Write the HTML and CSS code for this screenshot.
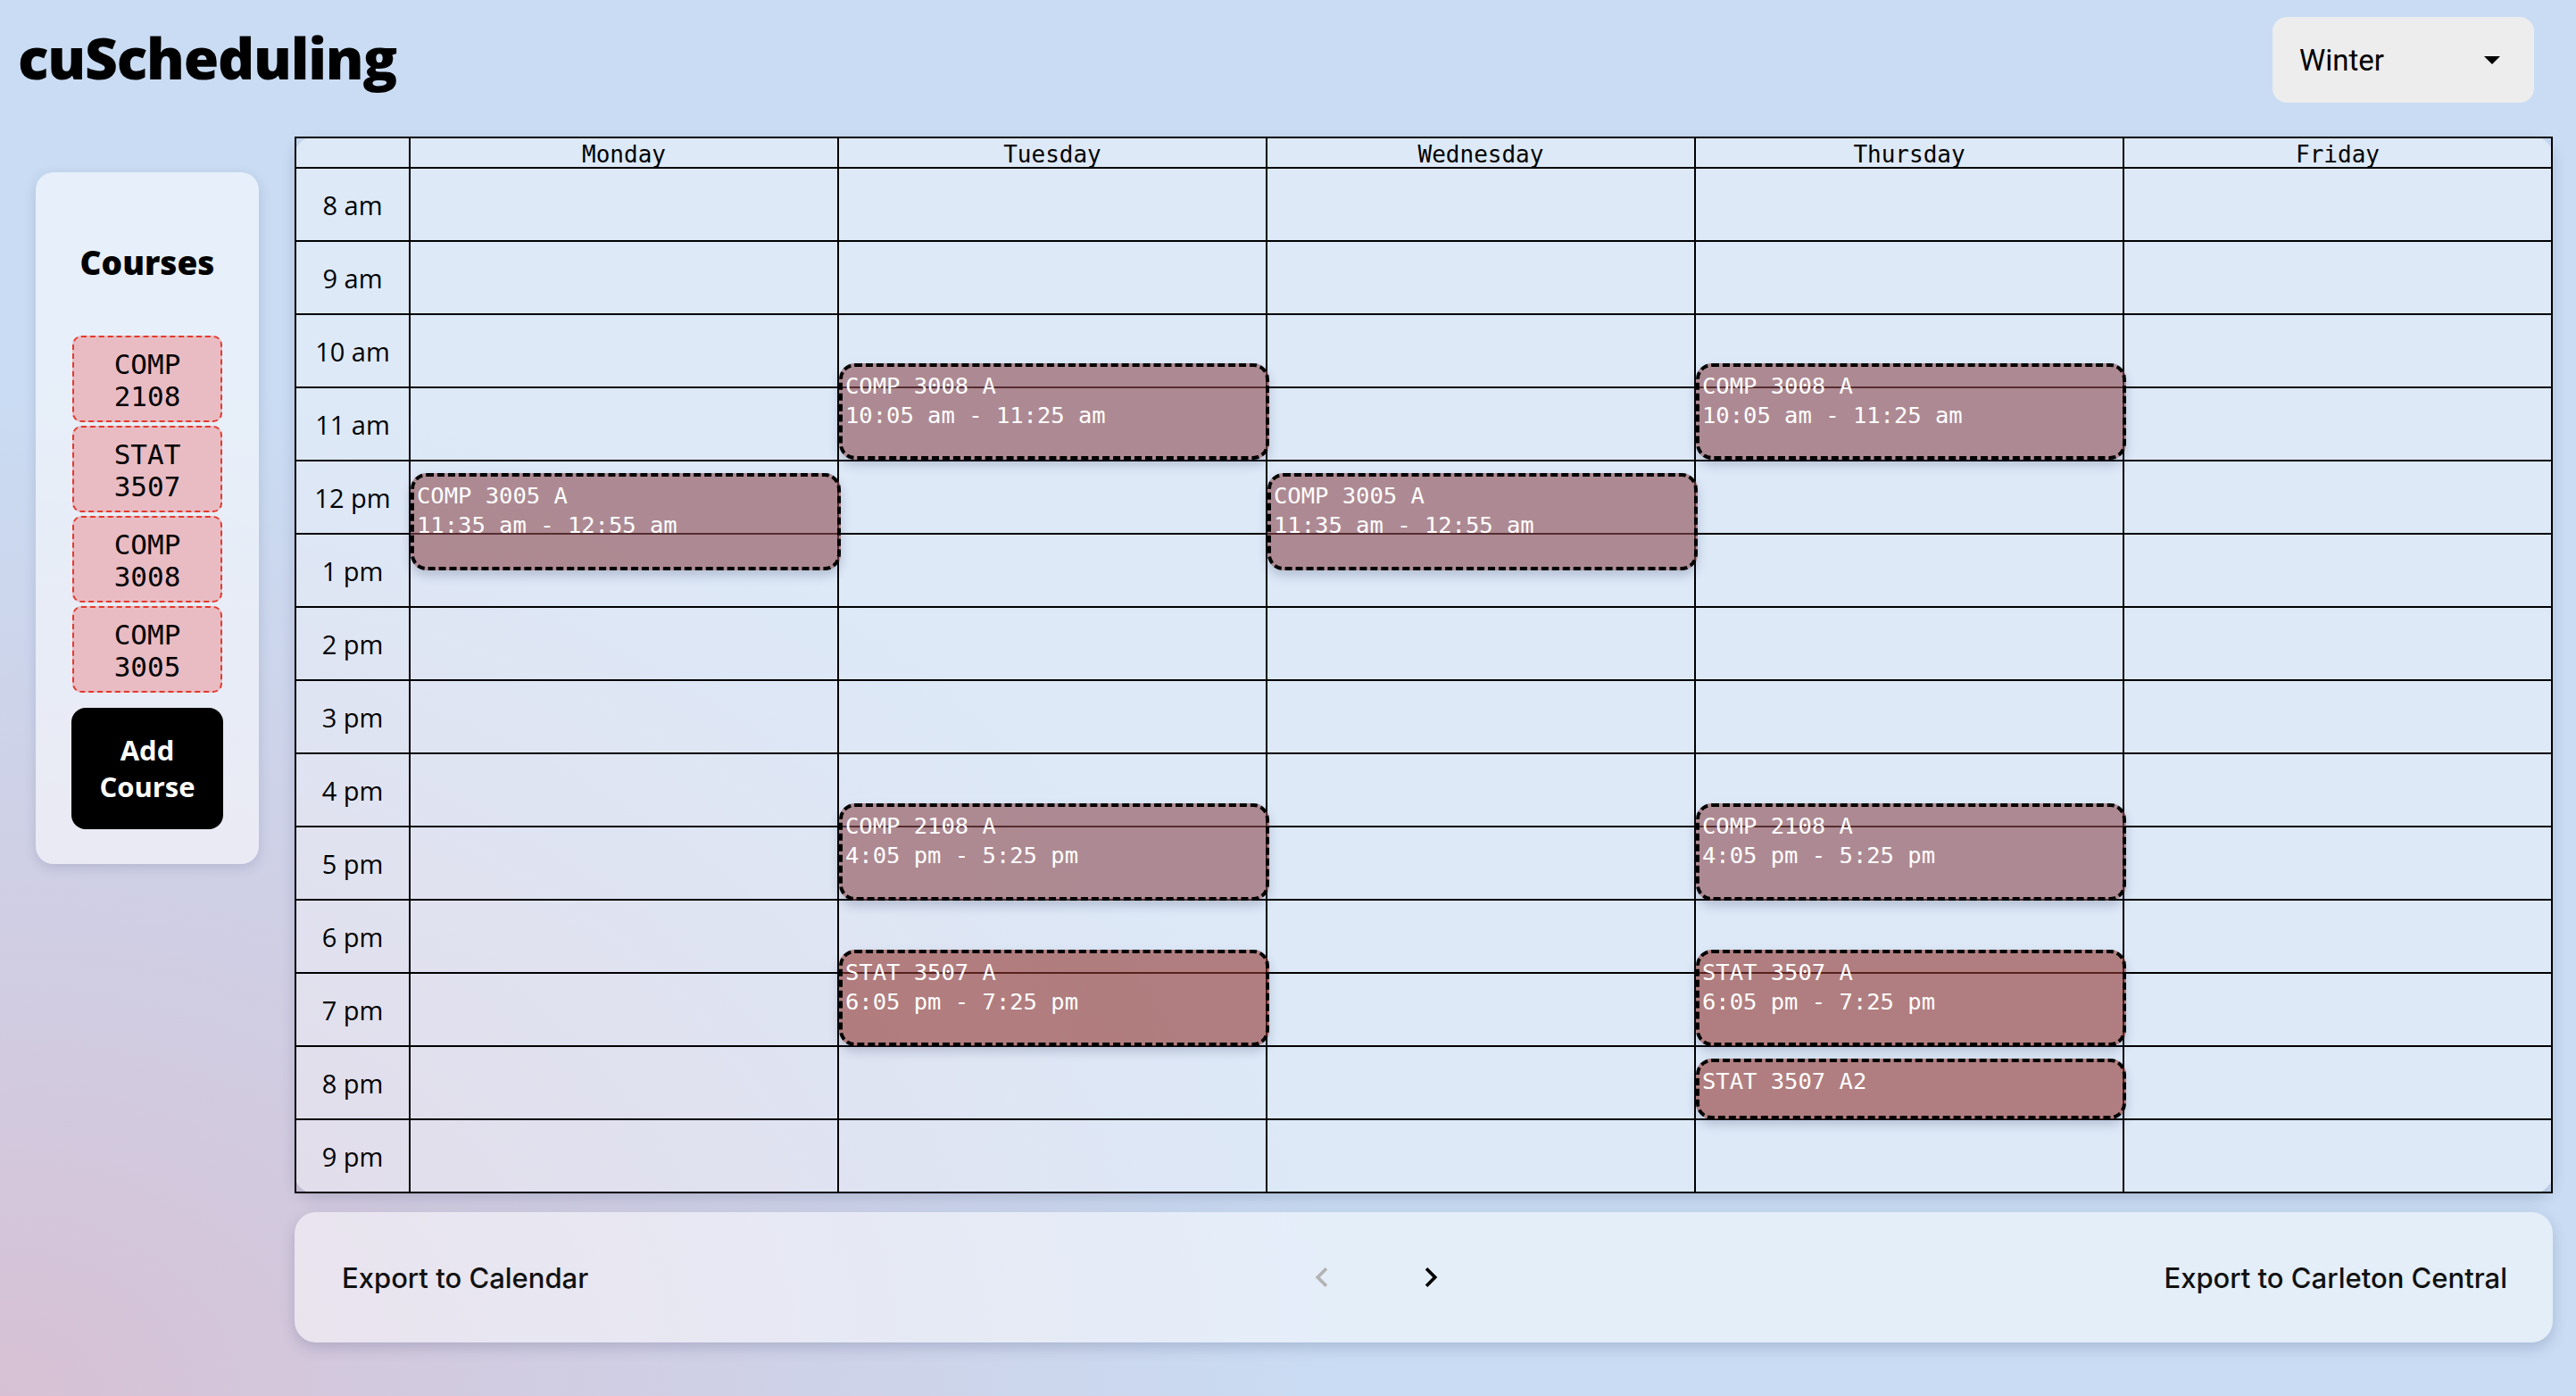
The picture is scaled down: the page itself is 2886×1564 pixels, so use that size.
FILE: index.html
```html
<!DOCTYPE html>
<html lang="en">
<head>
<meta charset="utf-8">
<title>cuScheduling</title>
<link rel="stylesheet" href="styles.css">
</head>
<body>
<div class="app">
  <header class="topbar">
    <h1 class="title">cuScheduling</h1>
    <div class="select">
      <span class="select-value">Winter</span>
      <svg class="caret" viewBox="7 10 10 5" width="18" height="9"><path d="M7 10l5 5 5-5z"/></svg>
    </div>
  </header>
  <div class="main">
    <aside class="sidebar">
      <h2 class="sidebar-title">Courses</h2>
      <div class="chips">
        <div class="chip">COMP<br>2108</div>
        <div class="chip">STAT<br>3507</div>
        <div class="chip">COMP<br>3008</div>
        <div class="chip">COMP<br>3005</div>
      </div>
      <button class="add-btn">Add<br>Course</button>
    </aside>
    <section class="content">
      <div class="calendar">
        <div class="grid">
          <div class="cell head"></div>
          <div class="cell head">Monday</div>
          <div class="cell head">Tuesday</div>
          <div class="cell head">Wednesday</div>
          <div class="cell head">Thursday</div>
          <div class="cell head">Friday</div>

          <div class="cell time">8 am</div><div class="cell"></div><div class="cell"></div><div class="cell"></div><div class="cell"></div><div class="cell"></div>
          <div class="cell time">9 am</div><div class="cell"></div><div class="cell"></div><div class="cell"></div><div class="cell"></div><div class="cell"></div>
          <div class="cell time">10 am</div><div class="cell"></div><div class="cell"></div><div class="cell"></div><div class="cell"></div><div class="cell"></div>
          <div class="cell time">11 am</div><div class="cell"></div><div class="cell"></div><div class="cell"></div><div class="cell"></div><div class="cell"></div>
          <div class="cell time">12 pm</div><div class="cell"></div><div class="cell"></div><div class="cell"></div><div class="cell"></div><div class="cell"></div>
          <div class="cell time">1 pm</div><div class="cell"></div><div class="cell"></div><div class="cell"></div><div class="cell"></div><div class="cell"></div>
          <div class="cell time">2 pm</div><div class="cell"></div><div class="cell"></div><div class="cell"></div><div class="cell"></div><div class="cell"></div>
          <div class="cell time">3 pm</div><div class="cell"></div><div class="cell"></div><div class="cell"></div><div class="cell"></div><div class="cell"></div>
          <div class="cell time">4 pm</div><div class="cell"></div><div class="cell"></div><div class="cell"></div><div class="cell"></div><div class="cell"></div>
          <div class="cell time">5 pm</div><div class="cell"></div><div class="cell"></div><div class="cell"></div><div class="cell"></div><div class="cell"></div>
          <div class="cell time">6 pm</div><div class="cell"></div><div class="cell"></div><div class="cell"></div><div class="cell"></div><div class="cell"></div>
          <div class="cell time">7 pm</div><div class="cell"></div><div class="cell"></div><div class="cell"></div><div class="cell"></div><div class="cell"></div>
          <div class="cell time">8 pm</div><div class="cell"></div><div class="cell"></div><div class="cell"></div><div class="cell"></div><div class="cell"></div>
          <div class="cell time">9 pm</div><div class="cell"></div><div class="cell"></div><div class="cell"></div><div class="cell"></div><div class="cell"></div>

          <div class="event comp mon" style="top:375px;height:109px">COMP 3005 A<br>11:35 am - 12:55 am</div>
          <div class="event comp tue" style="top:252px;height:108px">COMP 3008 A<br>10:05 am - 11:25 am</div>
          <div class="event comp wed" style="top:375px;height:109px">COMP 3005 A<br>11:35 am - 12:55 am</div>
          <div class="event comp thu" style="top:252px;height:108px">COMP 3008 A<br>10:05 am - 11:25 am</div>
          <div class="event comp tue" style="top:745px;height:109px">COMP 2108 A<br>4:05 pm - 5:25 pm</div>
          <div class="event comp thu" style="top:745px;height:109px">COMP 2108 A<br>4:05 pm - 5:25 pm</div>
          <div class="event stat tue" style="top:909px;height:108px">STAT 3507 A<br>6:05 pm - 7:25 pm</div>
          <div class="event stat thu" style="top:909px;height:108px">STAT 3507 A<br>6:05 pm - 7:25 pm</div>
          <div class="event stat thu" style="top:1031px;height:68px">STAT 3507 A2</div>
        </div>
      </div>
      <footer class="actions">
        <span class="action">Export to Calendar</span>
        <div class="pager">
          <svg class="chev disabled" viewBox="0 0 24 24" width="44" height="44"><path d="M15.41 7.41 14 6l-6 6 6 6 1.41-1.41L10.83 12z"/></svg>
          <svg class="chev" viewBox="0 0 24 24" width="44" height="44"><path d="M10 6 8.59 7.41 13.17 12l-4.58 4.59L10 18l6-6z"/></svg>
        </div>
        <span class="action">Export to Carleton Central</span>
      </footer>
    </section>
  </div>
</div>
</body>
</html>
```

FILE: styles.css
```css
* { box-sizing: border-box; }

html, body {
  margin: 0;
  padding: 0;
}

body {
  width: 2886px;
  height: 1564px;
  overflow: hidden;
  font-family: "Open Sans", "Liberation Sans", sans-serif;
  color: #000;
  background:
    radial-gradient(ellipse 1500px 1150px at 0% 100%, rgba(215, 192, 212, 1) 0%, rgba(215, 192, 212, 0.6) 35%, rgba(201, 220, 243, 0) 100%),
    #c9dcf3;
}

.app {
  width: 2886px;
  height: 1564px;
}

/* ---------- top bar ---------- */
.topbar {
  display: flex;
  justify-content: space-between;
  align-items: flex-start;
  height: 153px;
  padding: 0 47px 0 20px;
}

.title {
  margin: 33px 0 0 0;
  font-family: "Open Sans", sans-serif;
  font-weight: 800;
  font-size: 64px;
  line-height: 1;
  letter-spacing: -1.2px;
}

.select {
  margin-top: 19px;
  width: 293px;
  height: 96px;
  background: #ededed;
  border-radius: 16px;
  display: flex;
  align-items: center;
  padding-left: 30px;
  padding-right: 38px;
  font-family: Roboto, "Liberation Sans", sans-serif;
  font-size: 33px;
}

.select-value { flex: 1; }

.caret { fill: #000; }

/* ---------- main ---------- */
.main {
  display: flex;
  align-items: flex-start;
  padding-left: 40px;
  gap: 40px;
}

.sidebar {
  margin-top: 40px;
  width: 250px;
  height: 775px;
  background: rgba(255, 255, 255, 0.55);
  border-radius: 20px;
  box-shadow: 0 4px 14px rgba(60, 70, 110, 0.18);
  display: flex;
  flex-direction: column;
  align-items: center;
  padding-top: 76px;
}

.sidebar-title {
  margin: 0;
  font-weight: 800;
  font-size: 37px;
  line-height: 50px;
  height: 50px;
}

.chips {
  margin-top: 57px;
  display: flex;
  flex-direction: column;
  gap: 4px;
}

.chip {
  width: 168px;
  height: 97px;
  border: 2px dashed #e2392c;
  border-radius: 10px;
  background: #e9bcc3;
  display: flex;
  align-items: center;
  justify-content: center;
  text-align: center;
  font-family: "DejaVu Sans Mono", monospace;
  font-size: 31px;
  line-height: 36px;
  padding-top: 2px;
}

.add-btn {
  margin-top: 17px;
  width: 170px;
  height: 136px;
  border: none;
  border-radius: 16px;
  background: #000;
  color: #fff;
  font-family: "Open Sans", sans-serif;
  font-weight: 700;
  font-size: 31px;
  line-height: 41px;
  padding: 0;
}

/* ---------- calendar ---------- */
.content {
  width: 2530px;
  display: flex;
  flex-direction: column;
  gap: 21px;
}

.calendar {
  background: rgba(255, 255, 255, 0.37);
  border-radius: 22px;
  box-shadow: 0 6px 16px rgba(60, 70, 110, 0.2);
}

.grid {
  position: relative;
  display: grid;
  grid-template-columns: 128px repeat(5, 480px);
  grid-template-rows: 34px repeat(14, 82px);
  border-top: 2px solid #000;
  border-left: 2px solid #000;
}

.cell {
  border-right: 2px solid #000;
  border-bottom: 2px solid #000;
}

.head {
  font-family: "DejaVu Sans Mono", monospace;
  font-size: 26px;
  line-height: 32px;
  padding-top: 2px;
  text-align: center;
  overflow: hidden;
}

.time {
  display: flex;
  align-items: center;
  justify-content: center;
  font-family: "Open Sans", sans-serif;
  font-size: 29px;
}

.event {
  position: absolute;
  width: 482px;
  border: 4px dashed #000;
  border-radius: 18px;
  padding: 5px 3px;
  color: #fff;
  font-family: "DejaVu Sans Mono", monospace;
  font-size: 25.5px;
  line-height: 33px;
  white-space: nowrap;
  box-shadow: 0 6px 12px rgba(40, 50, 90, 0.22);
}

.event.comp { background: rgba(141, 75, 80, 0.6); }
.event.stat { background: rgba(146, 55, 48, 0.6); }

.mon { left: 128px; }
.tue { left: 608px; }
.wed { left: 1088px; }
.thu { left: 1568px; }

/* ---------- footer actions ---------- */
.actions {
  height: 146px;
  border-radius: 24px;
  background: rgba(255, 255, 255, 0.5);
  box-shadow: 0 6px 16px rgba(60, 70, 110, 0.22);
  display: flex;
  align-items: center;
  justify-content: space-between;
  padding: 0 51px 0 53px;
}

.action {
  font-family: Inter, "Liberation Sans", sans-serif;
  font-weight: 500;
  font-size: 31px;
  color: #111;
}

.pager {
  display: flex;
  gap: 78px;
}

.chev { fill: #000; display: block; }
.chev.disabled { fill: #b3b3b3; }
```
